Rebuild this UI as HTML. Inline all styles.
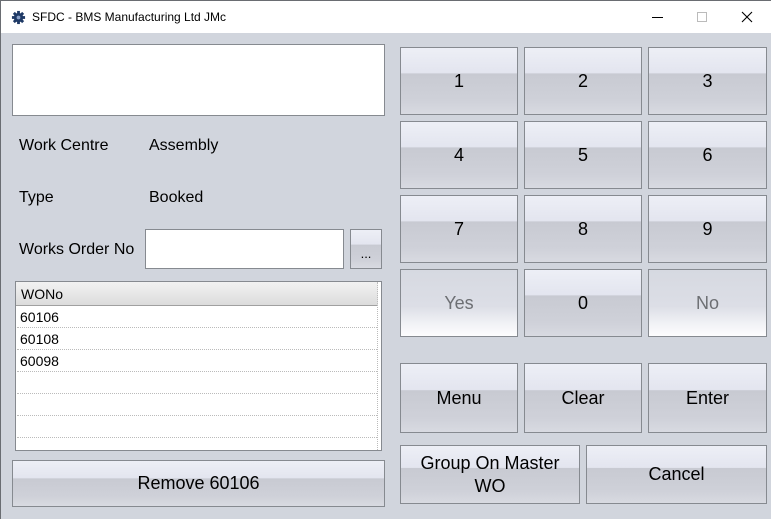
<!DOCTYPE html>
<html><head><style>
*{margin:0;padding:0;box-sizing:border-box}
body{width:771px;height:519px;overflow:hidden;background:#d1d5dd;font-family:"Liberation Sans",Arial,sans-serif;position:relative}
.title{position:absolute;left:0;top:0;width:771px;height:33px;background:#fff;border-top:1px solid #6a6d72}
.title span{position:absolute;left:32px;top:9px;font-size:12px;color:#000}
.a{position:absolute}
.btn{position:absolute;border:1px solid #868a90;background:linear-gradient(#edeff6 0%,#e3e5ef 38%,#c8cad2 39%,#cfd1d9 80%,#d8dae1 100%);display:flex;align-items:center;justify-content:center;font-size:18px;color:#000;text-align:center;line-height:23px}
.dis{background:linear-gradient(#d6d9e1 0%,#dcdee6 55%,#f0f1f5 80%,#fdfdfe 100%);color:#6d6f73}
.lbl{position:absolute;font-size:16px;color:#000}
.tb{position:absolute;background:#fff;border:1px solid #868a90}
.row{position:absolute;left:1px;width:360px;height:22px;border-bottom:1px dotted #bbb;font-size:14px;padding-left:3px;line-height:22px}
</style></head><body>
<div class="title">
<svg class="a" style="left:11px;top:9px" width="15" height="15" viewBox="0 0 16 16"><g fill="#1f3a66"><circle cx="8" cy="8" r="5"/><rect x="6.5" y="1" width="3" height="14"/><rect x="1" y="6.5" width="14" height="3"/><rect x="6.5" y="1" width="3" height="14" transform="rotate(45 8 8)"/><rect x="6.5" y="1" width="3" height="14" transform="rotate(-45 8 8)"/></g><circle cx="8" cy="8" r="2" fill="#8aa0c8"/></svg>
<span>SFDC - BMS Manufacturing Ltd JMc</span>
<div class="a" style="left:652px;top:16px;width:11px;height:1px;background:#000"></div>
<div class="a" style="left:697px;top:11px;width:10px;height:10px;border:1px solid #bbb"></div>
<svg class="a" style="left:741px;top:10px" width="12" height="12"><path d="M1 1L11 11M11 1L1 11" stroke="#000" stroke-width="1.1"/></svg>
</div>
<div class="a" style="left:0;top:0;width:1px;height:519px;background:#6a6d72"></div>

<div class="tb" style="left:12px;top:44px;width:373px;height:72px"></div>
<div class="lbl" style="left:19px;top:137px">Work Centre</div>
<div class="lbl" style="left:149px;top:137px">Assembly</div>
<div class="lbl" style="left:19px;top:189px">Type</div>
<div class="lbl" style="left:149px;top:189px">Booked</div>
<div class="lbl" style="left:19px;top:241px">Works Order No</div>
<div class="tb" style="left:145px;top:229px;width:199px;height:40px"></div>
<div class="btn" style="left:350px;top:229px;width:32px;height:40px;font-size:13px;padding-top:8px">...</div>

<div class="tb" style="left:15px;top:281px;width:367px;height:170px;overflow:hidden">
<div class="a" style="left:0;top:0;width:362px;height:24px;background:linear-gradient(#f2f2f2,#dcdcdc);border-bottom:1px solid #a0a0a0;font-size:14px;padding-left:5px;line-height:24px">WONo</div>
<div class="a" style="left:361px;top:0;width:1px;height:170px;border-left:1px dotted #bbb"></div>
<div class="row" style="top:24px">60106</div>
<div class="row" style="top:46px">60108</div>
<div class="row" style="top:68px">60098</div>
<div class="row" style="top:90px"></div>
<div class="row" style="top:112px"></div>
<div class="row" style="top:134px"></div>
</div>

<div class="btn" style="left:12px;top:460px;width:373px;height:47px">Remove 60106</div>

<div class="btn" style="left:400px;top:47px;width:118px;height:68px">1</div>
<div class="btn" style="left:524px;top:47px;width:118px;height:68px">2</div>
<div class="btn" style="left:648px;top:47px;width:119px;height:68px">3</div>
<div class="btn" style="left:400px;top:121px;width:118px;height:68px">4</div>
<div class="btn" style="left:524px;top:121px;width:118px;height:68px">5</div>
<div class="btn" style="left:648px;top:121px;width:119px;height:68px">6</div>
<div class="btn" style="left:400px;top:195px;width:118px;height:68px">7</div>
<div class="btn" style="left:524px;top:195px;width:118px;height:68px">8</div>
<div class="btn" style="left:648px;top:195px;width:119px;height:68px">9</div>
<div class="btn dis" style="left:400px;top:269px;width:118px;height:68px">Yes</div>
<div class="btn" style="left:524px;top:269px;width:118px;height:68px">0</div>
<div class="btn dis" style="left:648px;top:269px;width:119px;height:68px">No</div>
<div class="btn" style="left:400px;top:363px;width:118px;height:70px">Menu</div>
<div class="btn" style="left:524px;top:363px;width:118px;height:70px">Clear</div>
<div class="btn" style="left:648px;top:363px;width:119px;height:70px">Enter</div>
<div class="btn" style="left:400px;top:445px;width:180px;height:59px">Group On Master<br>WO</div>
<div class="btn" style="left:586px;top:445px;width:181px;height:59px">Cancel</div>
</body></html>
